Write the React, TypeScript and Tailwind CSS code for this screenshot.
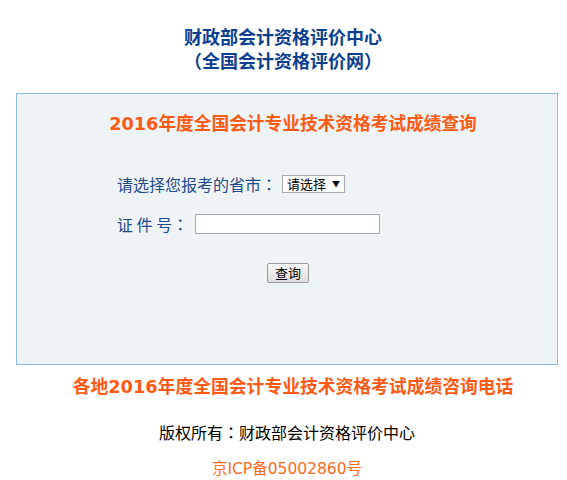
const cjk = "font-['DejaVu_Sans','Noto_Sans_CJK_SC',sans-serif]";

// centred full-width colon, as in the original page
function Colon() {
  return <span className="font-['Noto_Sans_CJK_TC',sans-serif]">：</span>;
}

function FormRow({ children, className = "" }: { children: React.ReactNode; className?: string }) {
  return <div className={`flex h-[20px] items-center ${className}`}>{children}</div>;
}

export default function App() {
  return (
    <div className={`h-[480px] w-[567px] bg-white ${cjk}`}>
      <div className="ml-[16px] w-[542px]">
        {/* site title */}
        <div className="pt-[26px] pr-[8px] text-center text-[18px] font-bold leading-[24px] text-[#0b3f8f]">
          <div>财政部会计资格评价中心</div>
          <div>（全国会计资格评价网）</div>
        </div>

        {/* query panel */}
        <div className="mt-[19px] h-[272px] border border-[#8cbbe8] bg-[#eef3f6]">
          <div className="pt-[19px] pl-[12px] text-center text-[17.7px] font-bold leading-[22px] text-[#ff5a14]">
            2016年度全国会计专业技术资格考试成绩查询
          </div>

          <div className="mt-[39px] pl-[100px] font-['Noto_Sans_CJK_SC',sans-serif] text-[16px] text-[#1f4c8c]">
            <FormRow>
              <span>
                请选择您报考的省市
                <Colon />
              </span>
              <div className="ml-[5px] flex h-[18px] w-[63px] items-center border border-[#a9a9a9] bg-white pl-[4px] text-[13px] text-black">
                <span>请选择</span>
                <span className="ml-[6px] text-[8px]">▼</span>
              </div>
            </FormRow>
            <FormRow className="mt-[20px]">
              <span>
                证 件 号
                <Colon />
              </span>
              <div className="ml-[7px] h-[20px] w-[185px] border border-[#a9a9a9] bg-white" />
            </FormRow>
          </div>

          <div className="mt-[29px] flex justify-center pl-[2px]">
            <button className="h-[20px] w-[42px] rounded-[2px] border border-[#9a9a9a] bg-gradient-to-b from-[#f6f6f6] to-[#dedede] font-['Noto_Sans_CJK_SC',sans-serif] text-[13px] leading-[18px] text-black">
              查询
            </button>
          </div>
        </div>

        {/* footer */}
        <div className="mt-[11px] pl-[12px] text-center text-[17.8px] font-bold leading-[22px] text-[#ff5a14]">
          各地2016年度全国会计专业技术资格考试成绩咨询电话
        </div>
        <div className="mt-[24px] text-center text-[16px] leading-[20px] text-black">
          版权所有
          <Colon />
          财政部会计资格评价中心
        </div>
        <div className="mt-[15px] text-center text-[15.5px] leading-[20px] text-[#ff6a1a]">
          京ICP备05002860号
        </div>
      </div>
    </div>
  );
}
